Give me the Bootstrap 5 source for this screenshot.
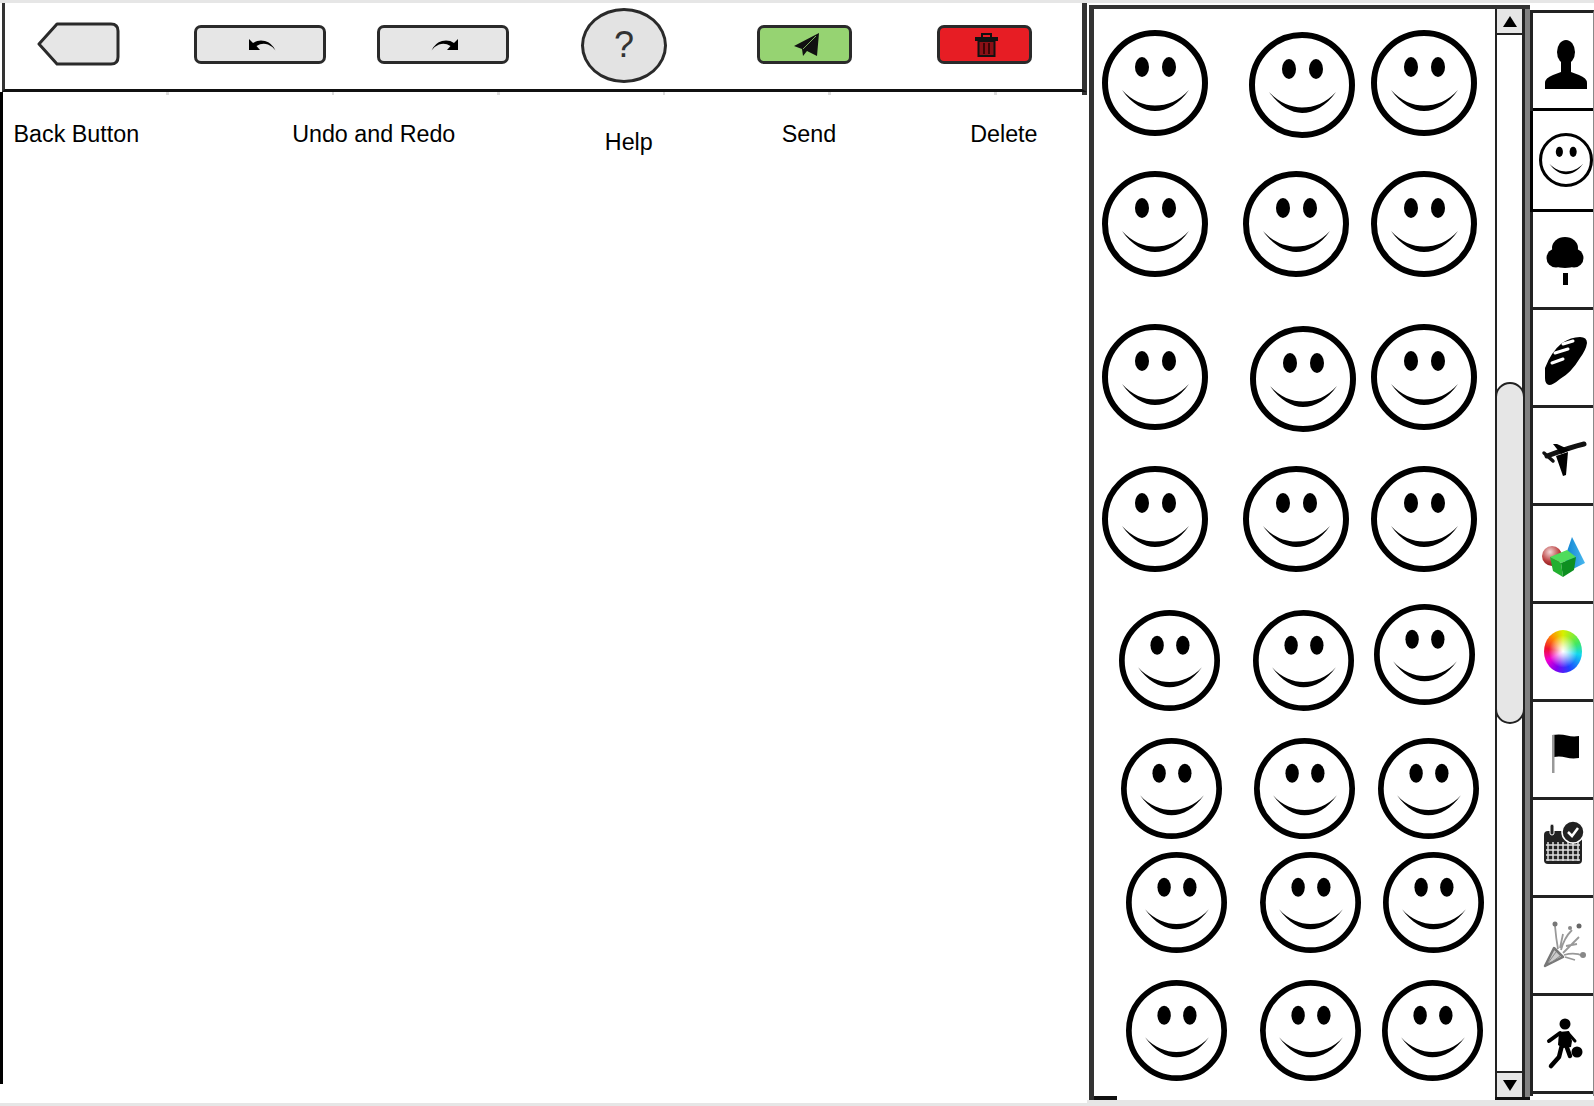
<!DOCTYPE html>
<html lang="en">
<head>
    <meta charset="UTF-8">
    <meta name="viewport" content="width=device-width, initial-scale=1.0">
    <title>Message editor wireframe</title>
    <link href="https://cdn.jsdelivr.net/npm/bootstrap@5.3.2/dist/css/bootstrap.min.css" rel="stylesheet">
    <style>
        html, body { height: 100%; }
        body {
            margin: 0;
            padding-top: 3px;
            background-color: #e6e6e6;
            font-family: "Liberation Sans", Arial, sans-serif;
            color: #000;
            overflow: hidden;
        }
        .app-frame { height: 1097px; background: #fff; }

        /* left side: toolbar and labels */
        .left-pane { width: 1087px; height: 1100px; background: #fff; flex: none; }
        .tool-strip {
            height: 89px;
            padding-bottom: 3px;
            margin-left: 2px;
            border-left: 3px solid #333;
            border-bottom: 3px solid #111;
            border-right: 5px solid #333;
        }
        .tick-strip {
            height: 3px;
            border-left: 3.5px solid #000;
            border-right: 5px solid #333;
            background: repeating-linear-gradient(90deg, #fff 0, #fff 163px, #ddd 163px, #ddd 165.6px);
        }
        .canvas-area { border-left: 3.5px solid #000; height: 989px; }
        .tool-btn {
            display: flex;
            align-items: center;
            justify-content: center;
            height: 39px;
            padding: 0 0 0 4px;
            border: 3px solid #2a2a2a;
            border-radius: 7px;
            background: #e6e6e6;
        }
        .tool-btn:hover { background: #e6e6e6; border-color: #2a2a2a; }
        .btn-undo { margin-left: 74px; width: 132px; }
        .btn-redo { margin-left: 51px; width: 132px; }
        .btn-send { margin-left: 90px; width: 95px; background: #96d372; }
        .btn-send:hover { background: #96d372; }
        .btn-trash { margin-left: 85px; width: 95px; background: #e71d24; }
        .btn-trash:hover { background: #e71d24; }
        .btn-back { margin-left: 32px; margin-bottom: 2px; width: 83px; height: 44px; padding: 0; border: 0; background: none; }
        .btn-help {
            margin-left: 72px;
            margin-top: 1px;
            width: 86px;
            height: 75px;
            padding: 0;
            border: 3px solid #2a2a2a;
            border-radius: 50%;
            background: #e3e3e3;
            font-size: 36px;
            line-height: 1;
            color: #333;
        }
        .btn-help:hover { background: #e3e3e3; border-color: #2a2a2a; color: #333; }
        .tool-label { font-size: 23.3px; line-height: 26px; }
        .label-row { padding-top: 26px; }
        .lbl-back { margin-left: 10.5px; }
        .lbl-undo { margin-left: 153px; }
        .lbl-help { margin-left: 149.5px; margin-top: 8px; }
        .lbl-send { margin-left: 129px; }
        .lbl-delete { margin-left: 134px; }

        /* smiley picker */
        .picker-pane {
            width: 406px;
            height: 1095px;
            margin-top: 2px;
            margin-left: 2px;
            border-top: 4px solid #333;
            border-left: 5px solid #333;
            flex: none;
        }
        .picker-foot { width: 23px; height: 4px; background: #111; }
        .smile-face { display: block; flex: none; }

        /* scrollbar */
        .scroll-col {
            width: 35px;
            height: 1095px;
            margin-top: 2px;
            border-top: 4px solid #333;
            border-bottom: 3px solid #111;
            flex: none;
        }
        .scroll-inner {
            width: 30px;
            border-left: 2.5px solid #222;
            border-right: 3px solid #222;
        }
        .scroll-gray { width: 5px; background: #808080; }
        .scroll-arrow {
            height: 26px;
            background: #e6e6e6;
            flex: none;
        }
        .arrow-up { border-bottom: 2px solid #222; }
        .arrow-down { border-top: 2px solid #222; }
        .scroll-thumb {
            height: 342px;
            margin-top: 347px;
            margin-left: -2.5px;
            margin-right: -3px;
            border: 2.5px solid #222;
            border-radius: 16px;
            background: #e6e6e6;
        }

        /* category tabs */
        .tab-col {
            width: 64px;
            height: 1086px;
            margin-top: 7px;
            border-top: 3px solid #222;
            border-left: 3px solid #222;
            border-right: 1px solid #888;
            flex: none;
        }
        .tab-item { height: 98px; border-bottom: 3px solid #222; flex: none; }
        .tab-item.tab-current {
            height: 101px;
            margin-left: -3px;
            padding-left: 5px;
            background: #fff;
            border-left: 3px solid #000;
            border-bottom-color: #000;
        }
        .tab-first { border-bottom-color: #000; }
        .color-wheel {
            width: 38px;
            height: 43px;
            border-radius: 50%;
            background:
                radial-gradient(closest-side, #fff 0, rgba(255,255,255,.75) 22%, rgba(255,255,255,0) 75%),
                conic-gradient(#d8f000, #40e860 60deg, #10d8f0 100deg, #2040ff 160deg, #8000f0 200deg, #f000d0 240deg, #f01030 280deg, #ff9000 325deg, #d8f000);
        }
    </style>
</head>
<body>
    <svg width="0" height="0" class="d-block" aria-hidden="true">
        <defs>
            <symbol id="smiley" viewBox="0 0 106 106">
                <circle cx="53" cy="53" r="50" fill="#fff" stroke="#000" stroke-width="6"/>
                <ellipse cx="40" cy="37" rx="7" ry="10"/>
                <ellipse cx="67" cy="37" rx="7" ry="10"/>
                <path d="M20 60C30 74 42 81 53 81C65 81 77 74 87 60C77 71 65 75.500 53 75.500C42 75.500 30 71 20 60Z"/>
            </symbol>
            <symbol id="undo-arrow" viewBox="0 0 28 13">
                <path d="M1 1V12H12L8.500 8Q14 4.500 20 6.500Q25 8.500 27.500 12.500Q24 5 17 3Q10 1.500 5 5Z"/>
            </symbol>
            <linearGradient id="cone-fill" x1="0" x2="1" y1="0" y2="0">
                <stop offset="0" stop-color="#0a7fd0"/>
                <stop offset="1" stop-color="#49b8ee"/>
            </linearGradient>
            <radialGradient id="ball-fill" cx=".4" cy=".3" r=".8">
                <stop offset="0" stop-color="#f4d8d8"/>
                <stop offset=".6" stop-color="#b93c3c"/>
                <stop offset="1" stop-color="#7e1010"/>
            </radialGradient>
        </defs>
    </svg>

    <div class="app-frame d-flex">
        <!-- toolbar and labels -->
        <div class="left-pane d-flex flex-column">
            <div class="tool-strip d-flex align-items-center">
                <button class="btn btn-back" type="button" aria-label="Back">
                    <svg class="d-block" width="83" height="44" viewBox="0 0 83 44">
                        <path d="M2 22L20 2H74Q81 2 81 9V35Q81 42 74 42H20Z" fill="#e6e6e6" stroke="#2a2a2a" stroke-width="3" stroke-linejoin="round"/>
                    </svg>
                </button>
                <button class="btn tool-btn btn-undo" type="button" aria-label="Undo">
                    <svg width="28" height="13"><use href="#undo-arrow"/></svg>
                </button>
                <button class="btn tool-btn btn-redo" type="button" aria-label="Redo">
                    <svg width="28" height="13" viewBox="0 0 28 13"><g transform="translate(28 0) scale(-1 1)"><use href="#undo-arrow" width="28" height="13"/></g></svg>
                </button>
                <button class="btn btn-help" type="button">?</button>
                <button class="btn tool-btn btn-send" type="button" aria-label="Send">
                    <svg width="26" height="24" viewBox="0 0 26 24">
                        <path d="M25 0L0 13L8 16L9 23L13 18L23 23Z" fill="#111"/>
                        <path d="M22 3L9 16" stroke="#96d372" stroke-width=".8"/>
                    </svg>
                </button>
                <button class="btn tool-btn btn-trash" type="button" aria-label="Delete">
                    <svg width="23" height="24" viewBox="0 0 23 24">
                        <path d="M7 4V1H16V4" fill="none" stroke="#111" stroke-width="2"/>
                        <rect x="0" y="4" width="23" height="4" fill="#111"/>
                        <rect x="3.500" y="8" width="16" height="15" fill="#8a1016" stroke="#111" stroke-width="2"/>
                        <path d="M9 10V21M14 10V21" stroke="#200" stroke-width="1.500"/>
                    </svg>
                </button>
            </div>
            <div class="tick-strip"></div>
            <div class="canvas-area">
                <div class="label-row d-flex align-items-start">
                    <span class="tool-label lbl-back">Back Button</span>
                    <span class="tool-label lbl-undo">Undo and Redo</span>
                    <span class="tool-label lbl-help">Help</span>
                    <span class="tool-label lbl-send">Send</span>
                    <span class="tool-label lbl-delete">Delete</span>
                </div>
            </div>
        </div>

        <!-- smiley picker -->
        <div class="picker-pane d-flex flex-column">
            <div id="faceRows"></div>
            <div class="picker-foot mt-auto"></div>
        </div>

        <!-- scrollbar -->
        <div class="scroll-col d-flex">
            <div class="scroll-inner d-flex flex-column">
                <div class="scroll-arrow arrow-up d-flex align-items-center justify-content-center">
                    <svg width="14" height="11"><polygon points="7,0 14,11 0,11"/></svg>
                </div>
                <div class="flex-grow-1"><div class="scroll-thumb"></div></div>
                <div class="scroll-arrow arrow-down d-flex align-items-center justify-content-center">
                    <svg width="14" height="11"><polygon points="0,0 14,0 7,11"/></svg>
                </div>
            </div>
            <div class="scroll-gray"></div>
        </div>

        <!-- category tabs -->
        <div class="tab-col d-flex flex-column">
            <div class="tab-item tab-first d-flex align-items-center justify-content-center">
                <svg width="60" height="60" viewBox="0 0 60 60">
                    <ellipse cx="33" cy="21" rx="9" ry="12"/>
                    <path d="M12 58V52Q12 47 20 44L28 41V30H38V41L46 44Q54 47 54 52V58Z"/>
                </svg>
            </div>
            <div class="tab-item tab-current d-flex align-items-center justify-content-center">
                <svg width="54" height="54"><use href="#smiley" width="54" height="54"/></svg>
            </div>
            <div class="tab-item d-flex align-items-center justify-content-center">
                <svg width="60" height="60" viewBox="0 0 60 60">
                    <ellipse cx="32" cy="18" rx="13" ry="11"/><circle cx="23" cy="28" r="9.500"/><circle cx="41" cy="28" r="9.500"/><ellipse cx="32" cy="31" rx="14" ry="7"/>
                    <rect x="30" y="43" width="5" height="12"/>
                </svg>
            </div>
            <div class="tab-item d-flex align-items-center justify-content-center">
                <svg width="60" height="60" viewBox="0 0 60 60">
                    <path d="M47 9Q54 9 54 15Q53 22 47 30Q38 45 27 51Q20 57 16 57Q12 56 12 50L12 40Q18 24 29 15Q38 9 47 9Z"/>
                    <path d="M19 35L30 31M22 25L35 21M30 16L40 13" stroke="#fff" stroke-width="3" stroke-linecap="round" fill="none"/>
                </svg>
            </div>
            <div class="tab-item d-flex align-items-center justify-content-center">
                <svg width="60" height="60" viewBox="0 0 60 60">
                    <path d="M51 18Q38 21 14 30" stroke="#111" stroke-width="5" stroke-linecap="round" fill="none"/>
                    <polygon points="23,30 35,26 33,49 30,50"/>
                    <polygon points="20,18 24,18 37,24 28,28"/>
                    <path d="M11 27L20 35" stroke="#111" stroke-width="3.500" stroke-linecap="round"/>
                </svg>
            </div>
            <div class="tab-item d-flex align-items-center justify-content-center">
                <svg width="60" height="60" viewBox="0 0 60 60">
                    <polygon points="39,13 52,39 40,45 31,36" fill="url(#cone-fill)"/>
                    <circle cx="19" cy="32" r="10" fill="url(#ball-fill)"/>
                    <polygon points="17,33 34,26 43,33 28,39" fill="#4fdc5c"/>
                    <polygon points="17,33 28,39 30,53 20,47" fill="#22b030"/>
                    <polygon points="28,39 43,33 41,46 30,53" fill="#0d8f20"/>
                </svg>
            </div>
            <div class="tab-item d-flex align-items-center justify-content-center">
                <div class="color-wheel"></div>
            </div>
            <div class="tab-item d-flex align-items-center justify-content-center">
                <svg width="60" height="60" viewBox="0 0 60 60">
                    <path d="M19 15Q28 14 34 15.500Q40 17 46 16V38Q39 39 33 37.500Q27 36 21 37V15Z"/>
                    <rect x="19" y="15" width="2.500" height="38" fill="#999"/>
                </svg>
            </div>
            <div class="tab-item d-flex align-items-center justify-content-center">
                <svg width="60" height="60" viewBox="2 2 60 60">
                    <rect x="13" y="15" width="38" height="33" rx="4" fill="#222"/>
                    <path d="M17 26V45M22 26V45M27 26V45M32 26V45M37 26V45M42 26V45M47 26V45M15 29H49M15 34H49M15 39H49M15 44H49" stroke="#ddd" stroke-width="1.500"/>
                    <rect x="19" y="8" width="4" height="11" rx="2" fill="#222" stroke="#fff"/>
                    <circle cx="42" cy="16" r="11" fill="#222" stroke="#fff" stroke-width="1.500"/>
                    <path d="M37 16L41 20L47 12" fill="none" stroke="#fff" stroke-width="2.500"/>
                </svg>
            </div>
            <div class="tab-item d-flex align-items-center justify-content-center">
                <svg width="60" height="60" viewBox="0 0 60 60">
                    <path d="M12 50L21 32L30 41Z" fill="#ccc" stroke="#777" stroke-width="2.500" stroke-linejoin="round"/>
                    <path d="M15 47L23 36M19 46L27 40" stroke="#888" stroke-width="1"/>
                    <path d="M25 33Q23 22 22 10M28 34Q31 22 39 14M30 37L46 21M31 39Q42 36 50 40M27 32L30 18M32 41L42 44M33 30L44 28" fill="none" stroke="#999" stroke-width="1.800"/>
                    <circle cx="22" cy="8" r="2.500" fill="#777"/><circle cx="46" cy="10" r="2.500" fill="#666"/><circle cx="50" cy="39" r="3" fill="#888"/><circle cx="37" cy="12" r="2" fill="#888"/>
                </svg>
            </div>
            <div class="tab-item d-flex align-items-center justify-content-center">
                <svg width="60" height="60" viewBox="0 0 60 60">
                    <circle cx="32" cy="10" r="5.500"/>
                    <circle cx="44" cy="38" r="5.500"/>
                    <path d="M26 18L36 17L39 27L38 33L30 34L25 31Z"/>
                    <path d="M27 19L16 27" fill="none" stroke="#000" stroke-width="4" stroke-linecap="round"/>
                    <path d="M35 19L42 27" fill="none" stroke="#000" stroke-width="3" stroke-linecap="round"/>
                    <path d="M29 31L26 43L18 52" fill="none" stroke="#000" stroke-width="4.500" stroke-linecap="round" stroke-linejoin="round"/>
                    <path d="M33 31L37 42" fill="none" stroke="#000" stroke-width="4.500" stroke-linecap="round"/>
                </svg>
            </div>
        </div>
    </div>

    <script src="https://cdn.jsdelivr.net/npm/bootstrap@5.3.2/dist/js/bootstrap.bundle.min.js"></script>
    <script>
        // x, y, diameter of each face in page pixels, row by row (the mockup's faces are not on a regular grid)
        const faceData = [
            [[1102, 30, 106], [1249, 32, 106], [1371, 30, 106]],
            [[1102, 171, 106], [1243, 171, 106], [1371, 171, 106]],
            [[1102, 324, 106], [1250, 326, 106], [1371, 324, 106]],
            [[1102, 466, 106], [1243, 466, 106], [1371, 466, 106]],
            [[1119, 610, 101], [1253, 610, 101], [1374, 604, 101]],
            [[1121, 738, 101], [1254, 738, 101], [1378, 738, 101]],
            [[1126, 852, 101], [1260, 852, 101], [1383, 852, 101]],
            [[1126, 980, 101], [1260, 980, 101], [1382, 980, 101]]
        ];
        const innerLeft = 1094;
        const innerTop = 9;
        const holder = document.getElementById("faceRows");

        faceData.forEach(function (row, i) {
            const rowTop = i === 0 ? innerTop : Math.min(...row.map(f => f[1]));
            const nextTop = i + 1 < faceData.length ? Math.min(...faceData[i + 1].map(f => f[1])) : 1083;
            const rowEl = document.createElement("div");
            rowEl.className = "d-flex align-items-start";
            rowEl.style.height = (nextTop - rowTop) + "px";
            let edge = innerLeft;
            row.forEach(function (f) {
                const wrap = document.createElement("div");
                wrap.className = "smile-face";
                wrap.style.marginLeft = (f[0] - edge) + "px";
                wrap.style.marginTop = (f[1] - rowTop) + "px";
                wrap.innerHTML = '<svg class="d-block" width="' + f[2] + '" height="' + f[2] + '"><use href="#smiley" width="' + f[2] + '" height="' + f[2] + '"/></svg>';
                rowEl.appendChild(wrap);
                edge = f[0] + f[2];
            });
            holder.appendChild(rowEl);
        });
    </script>
</body>
</html>
